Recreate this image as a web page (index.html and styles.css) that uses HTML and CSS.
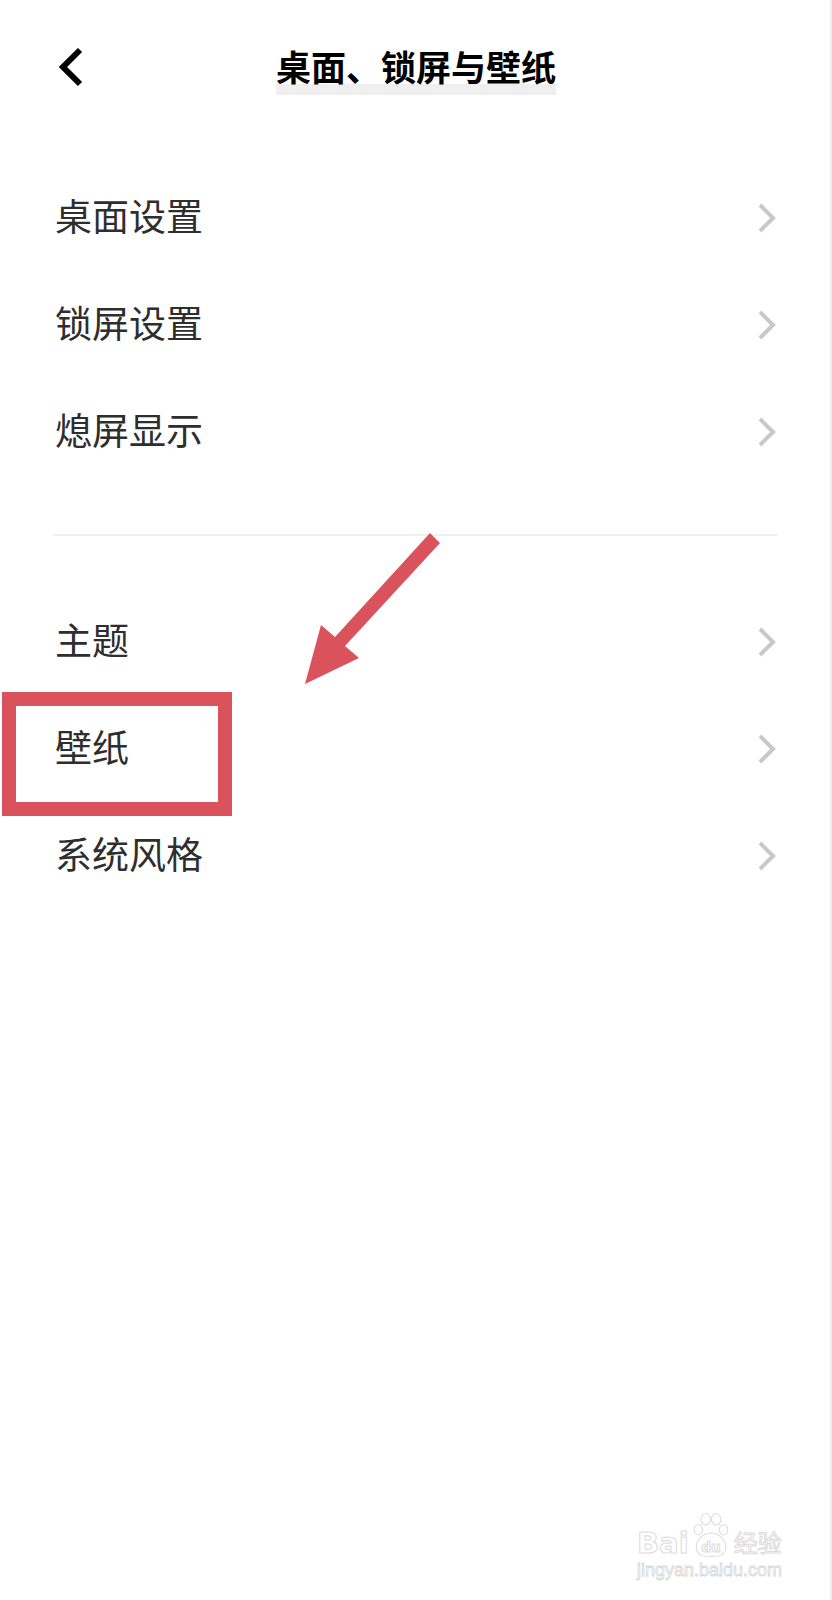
FILE: index.html
```html
<!DOCTYPE html>
<html lang="zh-CN">
<head>
    <meta charset="UTF-8" />
    <title>桌面、锁屏与壁纸</title>
    <meta name="viewport" content="width=device-width, initial-scale=1">
    <link rel="stylesheet" href="styles.css">
</head>
<body>

<div class="page">

  <header class="topbar">
    <a class="back" href="#">
      <svg width="30" height="46" viewBox="0 0 30 46">
        <polyline points="23,6 6,23 23,40" fill="none" stroke="#000" stroke-width="6"/>
      </svg>
    </a>
    <h1 class="title"><span>桌面、锁屏与壁纸</span></h1>
  </header>

  <ul class="group group-first">
    <li class="row">
      <span class="label">桌面设置</span>
      <svg class="chev" viewBox="0 0 20 32"><polyline points="3,3 16,16 3,29"/></svg>
    </li>
    <li class="row">
      <span class="label">锁屏设置</span>
      <svg class="chev" viewBox="0 0 20 32"><polyline points="3,3 16,16 3,29"/></svg>
    </li>
    <li class="row">
      <span class="label">熄屏显示</span>
      <svg class="chev" viewBox="0 0 20 32"><polyline points="3,3 16,16 3,29"/></svg>
    </li>
  </ul>

  <hr class="divider">

  <ul class="group group-second">
    <li class="row">
      <span class="label">主题</span>
      <svg class="chev" viewBox="0 0 20 32"><polyline points="3,3 16,16 3,29"/></svg>
    </li>
    <li class="row">
      <span class="label">壁纸</span>
      <svg class="chev" viewBox="0 0 20 32"><polyline points="3,3 16,16 3,29"/></svg>
    </li>
    <li class="row">
      <span class="label">系统风格</span>
      <svg class="chev" viewBox="0 0 20 32"><polyline points="3,3 16,16 3,29"/></svg>
    </li>
  </ul>

  <!-- annotation on top of the screenshot -->
  <div class="mark-box"></div>
  <svg class="mark-arrow" width="160" height="180" viewBox="0 0 160 180">
    <polygon points="140,13 150,23 55,126 69,138 15,164 31,105 45,117"/>
  </svg>

  <div class="watermark">
    <div class="wm-logo">
      <span class="wm-bai">Bai</span>
      <svg class="wm-paw" width="42" height="46" viewBox="0 0 36 44">
        <ellipse cx="6" cy="17" rx="4" ry="5"/>
        <ellipse cx="13" cy="7" rx="4.5" ry="5.5"/>
        <ellipse cx="23" cy="7" rx="4.5" ry="5.5"/>
        <ellipse cx="30" cy="17" rx="4" ry="5"/>
        <path d="M18 20 C8 20 3 30 4 35 C5 42 12 43 18 42 C24 43 31 42 32 35 C33 30 28 20 18 20 Z"/>
        <text x="18" y="38" text-anchor="middle">du</text>
      </svg>
      <span class="wm-jy">经验</span>
    </div>
    <div class="wm-url">jingyan.baidu.com</div>
  </div>

</div>

</body>
</html>
```

FILE: styles.css
```css
* {
  box-sizing: border-box;
}

body {
  margin: 0;
  background: #fff;
  font-family: "Noto Sans CJK SC", "Noto Sans", sans-serif;
}

.page {
  position: relative;
  width: 832px;
  height: 1600px;
  overflow: hidden;
  box-shadow: inset -2px 0 #eeeeee;
}

/* top bar */
.topbar {
  display: grid;
  grid-template-columns: 1fr auto 1fr;
  align-items: start;
  height: 136px;
  padding-top: 48px;
}

.back {
  display: block;
  width: 30px;
  height: 46px;
  margin: -4px 0 0 57px;
}

.back svg {
  display: block;
}

.title {
  margin: 0;
  font-size: 35px;
  line-height: 35px;
  font-weight: 700;
  color: #000;
}

.title span {
  display: inline-block;
  padding-bottom: 12px;
  background: linear-gradient(to bottom, transparent 36px, #efefef 36px);
}

/* settings list */
.group {
  list-style: none;
  margin: 0;
  padding: 0;
}

.group-first {
  padding-top: 28px;
}

.group-second {
  padding-top: 52px;
}

.row {
  display: flex;
  align-items: center;
  justify-content: space-between;
  height: 107px;
  padding: 0 55px 0 55px;
}

.label {
  font-size: 37px;
  line-height: 1;
  padding-bottom: 4px;
  color: #2e2e2e;
}

.chev {
  width: 20px;
  height: 32px;
  fill: none;
  stroke: #c8c8c8;
  stroke-width: 4;
}

.divider {
  margin: 49px 54px 0 53px;
  height: 2px;
  border: 0;
  background: #f0f0f0;
}

/* red annotation */
.mark-box {
  position: absolute;
  left: 2px;
  top: 692px;
  width: 230px;
  height: 124px;
  border: 14px solid #da525b;
}

.mark-arrow {
  position: absolute;
  left: 290px;
  top: 520px;
  fill: #da525b;
}

/* watermark */
.watermark {
  position: absolute;
  left: 637px;
  top: 1512px;
  width: 170px;
}

.wm-logo {
  display: flex;
  align-items: flex-end;
}

.wm-bai {
  font-family: "DejaVu Sans", sans-serif;
  font-weight: 700;
  font-size: 29px;
  line-height: 1;
  color: #fff;
  -webkit-text-stroke: 1px #dcdcdc;
}

.wm-paw {
  display: block;
  margin: 0 2px 0 1px;
  fill: #fff;
  stroke: #dcdcdc;
  stroke-width: 1;
}

.wm-paw text {
  font-family: "DejaVu Sans", sans-serif;
  font-size: 13px;
  font-weight: 700;
}

.wm-jy {
  font-size: 24px;
  line-height: 1;
  margin-bottom: 4px;
  color: #fff;
  -webkit-text-stroke: 1px #dcdcdc;
}

.wm-url {
  margin-top: 3px;
  font-family: "Liberation Sans", sans-serif;
  font-size: 18px;
  line-height: 1;
  color: #fff;
  -webkit-text-stroke: 0.8px #d6d6d6;
}
```
